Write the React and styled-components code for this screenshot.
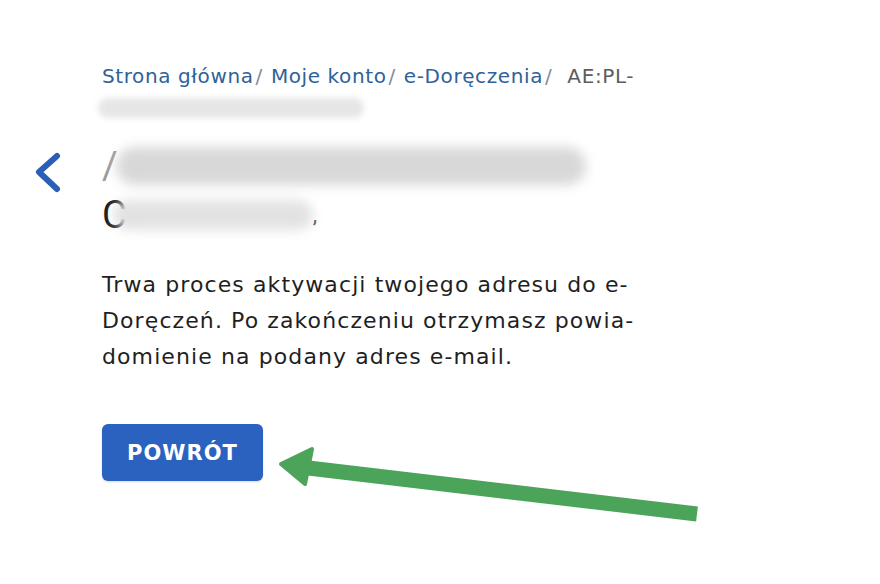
import React from "react";
import styled, { createGlobalStyle } from "styled-components";

const GlobalStyle = createGlobalStyle`
    html, body {
        margin: 0;
        padding: 0;
        background: #ffffff;
    }
    body {
        font-family: "DejaVu Sans", Roboto, "Liberation Sans", sans-serif;
        color: #222222;
    }
`;

const Page = styled.div`
    position: relative;
    width: 880px;
    height: 584px;
    overflow: hidden;
    display: grid;
    grid-template-columns: 102px 1fr;
    align-content: start;
`;

const Crumbs = styled.nav`
    grid-column: 2;
    margin-top: 63px;
    display: flex;
    align-items: baseline;
    font-size: 20px;
    letter-spacing: 0.6px;
    line-height: 26px;
    white-space: nowrap;
`;

const Crumb = styled.span`
    color: ${(p) => (p.$current ? "#5d5d5d" : "#2f6298")};
`;

const Slash = styled.span`
    color: #7d8da0;
    margin: 0 ${(p) => (p.$wide ? "15px" : "8px")} 0 2px;
`;

const Blur = styled.div`
    width: ${(p) => p.$w}px;
    height: ${(p) => p.$h}px;
    background: ${(p) => p.$color || "#e4e4e4"};
    border-radius: ${(p) => p.$h / 2}px;
    filter: blur(${(p) => p.$blur || 4}px);
    margin-left: ${(p) => p.$ml || 0}px;
`;

const CrumbTail = styled.div`
    grid-column: 2;
    margin: 9px 0 0 -4px;
`;

const BackCell = styled.div`
    grid-column: 1;
    display: flex;
    justify-content: flex-start;
    padding: 34px 0 0 34px;
`;

const Title = styled.div`
    grid-column: 2;
    margin-top: 27px;
    display: flex;
    flex-direction: column;
    gap: 10px;
`;

const TitleLine = styled.div`
    display: flex;
    align-items: center;
    height: ${(p) => p.$h}px;
`;

const Glyph = styled.span`
    font-family: Roboto, sans-serif;
    font-size: ${(p) => p.$size || 38}px;
    line-height: 38px;
    color: ${(p) => p.$color || "#111"};
    font-weight: 400;
`;

const Text = styled.p`
    grid-column: 2;
    margin: 34px 0 0;
    width: 640px;
    font-size: 22px;
    letter-spacing: 1.1px;
    line-height: 36px;
    color: #1f1f1f;
`;

const Button = styled.button`
    grid-column: 2;
    justify-self: start;
    margin-top: 49px;
    width: 161px;
    height: 57px;
    border: none;
    border-radius: 6px;
    background: #2b62c0;
    color: #ffffff;
    font-family: "DejaVu Sans", Roboto, sans-serif;
    font-weight: 700;
    font-size: 21px;
    letter-spacing: 1px;
    box-shadow: 0 1px 2px rgba(0, 0, 0, 0.15);
`;

const Annotation = styled.svg`
    position: absolute;
    left: 0;
    top: 0;
    pointer-events: none;
`;

export default function App() {
    return (
        <>
            <GlobalStyle />
            <Page>
                <Crumbs>
                    <Crumb>Strona główna</Crumb>
                    <Slash>/</Slash>
                    <Crumb>Moje konto</Crumb>
                    <Slash>/</Slash>
                    <Crumb>e-Doręczenia</Crumb>
                    <Slash $wide>/</Slash>
                    <Crumb $current>AE:PL-</Crumb>
                </Crumbs>
                <CrumbTail>
                    <Blur $w={266} $h={20} $color="#e6e6e6" $blur={3} />
                </CrumbTail>

                <BackCell>
                    <svg width="34" height="42" viewBox="0 0 34 42">
                        <path
                            d="M23 4 L5 20 L23 37"
                            fill="none"
                            stroke="#2a5fb7"
                            strokeWidth="6"
                            strokeLinecap="round"
                            strokeLinejoin="round"
                        />
                    </svg>
                </BackCell>
                <Title>
                    <TitleLine $h={42}>
                        <Glyph $color="#9a9a9a">/</Glyph>
                        <Blur $w={470} $h={38} $color="#d8d8d8" $blur={6} $ml={-2} />
                    </TitleLine>
                    <TitleLine $h={36}>
                        <Glyph>C</Glyph>
                        <Blur $w={200} $h={30} $color="#e2e2e2" $blur={6} $ml={-14} />
                        <Glyph $color="#444" $size={22}>,</Glyph>
                    </TitleLine>
                </Title>

                <Text>
                    Trwa proces aktywacji twojego adresu do e-
                    <br />
                    Doręczeń. Po zakończeniu otrzymasz powia-
                    <br />
                    domienie na podany adres e-mail.
                </Text>

                <Button>POWRÓT</Button>

                <Annotation width="880" height="584" viewBox="0 0 880 584">
                    <line x1="697" y1="514" x2="300" y2="467" stroke="#4ca35a" strokeWidth="15" />
                    <path
                        d="M281 464 L312 449 L305 484 Z"
                        fill="#4ca35a"
                        stroke="#4ca35a"
                        strokeWidth="4"
                        strokeLinejoin="round"
                    />
                </Annotation>
            </Page>
        </>
    );
}
